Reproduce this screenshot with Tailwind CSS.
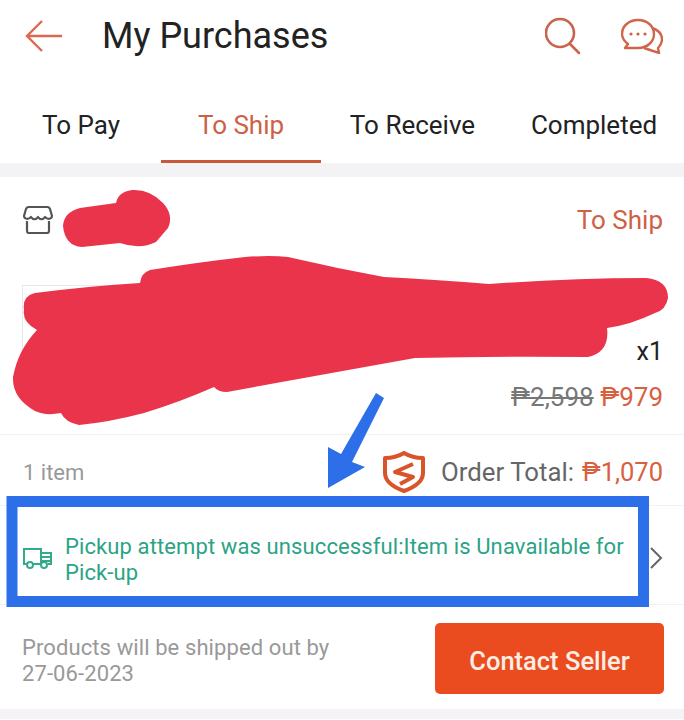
<!DOCTYPE html>
<html>
<head>
<meta charset="utf-8">
<title>My Purchases</title>
<script src="https://cdn.jsdelivr.net/npm/@tailwindcss/browser@4"></script>
</head>
<body class="bg-white">
<div class="relative w-[684px] h-[720px] overflow-hidden bg-white font-['Roboto',sans-serif] text-[#222]">

  <!-- Header -->
  <header class="flex items-center h-[70px] pt-[1px] pl-[25px] pr-[21px]">
    <svg class="w-[38px] h-[34px]" viewBox="0 0 38 34" fill="none" stroke="#dd6a50" stroke-width="2.4"><path d="M37 17H2M17 2L2 17l15 15"/></svg>
    <h1 class="ml-[39px] text-[36px] font-normal text-[#222]">My Purchases</h1>
    <svg class="ml-auto w-[38px] h-[38px]" viewBox="0 0 38 38" fill="none" stroke="#c9634c" stroke-width="2.6"><circle cx="15" cy="16" r="14"/><path d="M25 27l9 9" stroke-linecap="round"/></svg>
    <svg class="ml-[38px] w-[42px] h-[36px]" viewBox="0 0 42 36" fill="none" stroke="#d0654c" stroke-width="2.4" stroke-linejoin="round"><path d="M17 2c9 0 16 6 16 14s-7 14-16 14H4l3-4C3 23 1 20 1 16 1 8 8 2 17 2z"/><path d="M31 10c6 2 10 6 10 11 0 4-2 7-4 9l1 5-9-3-6-2"/><circle cx="10" cy="16" r="1.6" fill="#c9634c" stroke="none"/><circle cx="17" cy="16" r="1.6" fill="#c9634c" stroke="none"/><circle cx="24" cy="16" r="1.6" fill="#c9634c" stroke="none"/></svg>
  </header>

  <!-- Tabs -->
  <nav class="grid grid-cols-[161px_160px_180px_183px] h-[93px] text-[26px]">
    <div class="flex items-start justify-center pt-[36px] pl-[1px]">To Pay</div>
    <div class="flex items-start justify-center pt-[36px] text-[#cf5f45] border-b-[3px] border-[#c9583a]">To Ship</div>
    <div class="flex items-start justify-center pt-[36px] pl-[3px]">To Receive</div>
    <div class="flex items-start justify-center pt-[36px] pl-[3px]">Completed</div>
  </nav>
  <div class="h-[14px] bg-[#f3f2f4]"></div>

  <!-- Shop row -->
  <section class="flex items-center justify-between h-[86px] pl-[23px] pr-[21px]">
    <svg class="w-[30px] h-[28px]" viewBox="0 0 30 28" fill="none" stroke="#555" stroke-width="2.2" stroke-linejoin="round"><path d="M6 1h18q2 0 3 2l2 7c0 3-4 4-7 1-2 3-5 3-7 0-2 3-5 3-7 0-3 3-7 2-7-1l2-7q1-2 3-2z"/><path d="M4 15v10q0 2 2 2h18q2 0 2-2V15"/></svg>
    <span class="text-[26px] text-[#cf5f45]">To Ship</span>
  </section>

  <!-- Product row -->
  <section class="flex justify-between h-[172px] pl-[22px] pr-[21px] border-b border-[#f2f2f2]">
    <div class="w-[112px] h-[112px] mt-[22px] border border-[#e8e8e8]"></div>
    <div class="flex flex-col items-end">
      <span class="mt-[70px] text-[25px] text-[#222]">x1</span>
      <div class="mt-[7px] text-[26px]"><span class="text-[#777] line-through">₱2,598</span> <span class="text-[#d9603f]">₱979</span></div>
    </div>
  </section>

  <!-- Total row -->
  <section class="flex items-center h-[71px] pt-[4px] pl-[23px] pr-[21px] border-b border-[#f2f2f2]">
    <span class="text-[22px] text-[#999]">1 item</span>
    <svg class="ml-auto w-[42px] h-[42px]" viewBox="0 0 42 42" fill="none"><path d="M21 2c5 3 12 5 19 5v15c0 8-8 14-19 18C10 36 2 30 2 22V7c7 0 14-2 19-5z" stroke="#d9542b" stroke-width="4" stroke-linejoin="round"/><path d="M30 13L12 21l18 5-13 7" stroke="#d9542b" stroke-width="4" stroke-linejoin="round"/></svg>
    <span class="ml-[16px] text-[25.8px] text-[#666]">Order Total:</span>
    <span class="ml-[8px] text-[25.5px] text-[#d9603f]">₱1,070</span>
  </section>

  <!-- Logistics status -->
  <section class="flex items-center h-[99px] pt-[6px] pl-[23px] pr-[21px] border-b border-[#f2f2f2]">
    <svg class="shrink-0 w-[29px] h-[22px]" viewBox="0 0 29 22" fill="none" stroke="#35a98c" stroke-width="2"><path d="M5 17H1V2h17v15H10"/><path d="M18 6h10v11h-3M18 10h10M18 14h10"/><circle cx="7" cy="18" r="3"/><circle cx="21" cy="18" r="3"/></svg>
    <p class="ml-[13px] mt-[4px] w-[570px] text-[22px] tracking-[0.11px] leading-[26px] text-[#2ba386]">Pickup attempt was unsuccessful:Item is Unavailable for Pick-up</p>
    <svg class="ml-auto w-[13px] h-[22px]" viewBox="0 0 13 22" fill="none" stroke="#666" stroke-width="2"><path d="M1 1l10 10L1 21"/></svg>
  </section>

  <!-- Footer -->
  <section class="flex items-center justify-between h-[104px] pt-[2px] pl-[22px] pr-[20px]">
    <p class="mt-[5px] text-[22px] tracking-[0.1px] leading-[26px] text-[#999]">Products will be shipped out by<br>27-06-2023</p>
    <button class="w-[229px] h-[71px] pt-[6px] rounded-[5px] bg-[#ea4c20] text-[25.5px] font-medium text-[#fdeee4]">Contact Seller</button>
  </section>
  <div class="h-[10px] bg-[#f5f3f5]"></div>

  <!-- Annotations drawn over the screenshot -->
  <svg class="absolute left-0 top-0 w-[684px] h-[720px] pointer-events-none" viewBox="0 0 684 720" fill="none">
    <path d="M63 226 Q64 212 80 208 L116 203 Q118 192 132 190 Q150 189 163 203 Q174 215 168 228 L156 242 Q140 250 120 243 L82 247 Q65 246 63 226 Z" fill="#ea344b"/>
    <path d="M35 293 Q90 286 140 283 Q141 273 150 270 Q200 262 245 257 Q270 255 288 257 Q335 268 384 277 Q440 280 489 284 Q570 278 646 278 Q668 280 668 298 Q666 310 655 313 Q630 325 607 328 Q610 352 588 357 Q500 356 415 358 Q320 375 227 392 Q218 392 214 387 Q180 402 144 413 Q110 422 79 425 Q65 422 61 413 Q45 416 35 411 Q12 398 13 377 Q18 350 37 330 Q22 322 24 310 Q22 296 35 293 Z" fill="#ea344b"/>
    <path d="M376 393 L384 398 L352 462 L365 467 L328 488 L328 447 L341 454 Z" fill="#2c6fe8"/>
    <rect x="12" y="501.500" width="631.500" height="100" stroke="#2c6fe8" stroke-width="11"/>
  </svg>
</div>
</body>
</html>
